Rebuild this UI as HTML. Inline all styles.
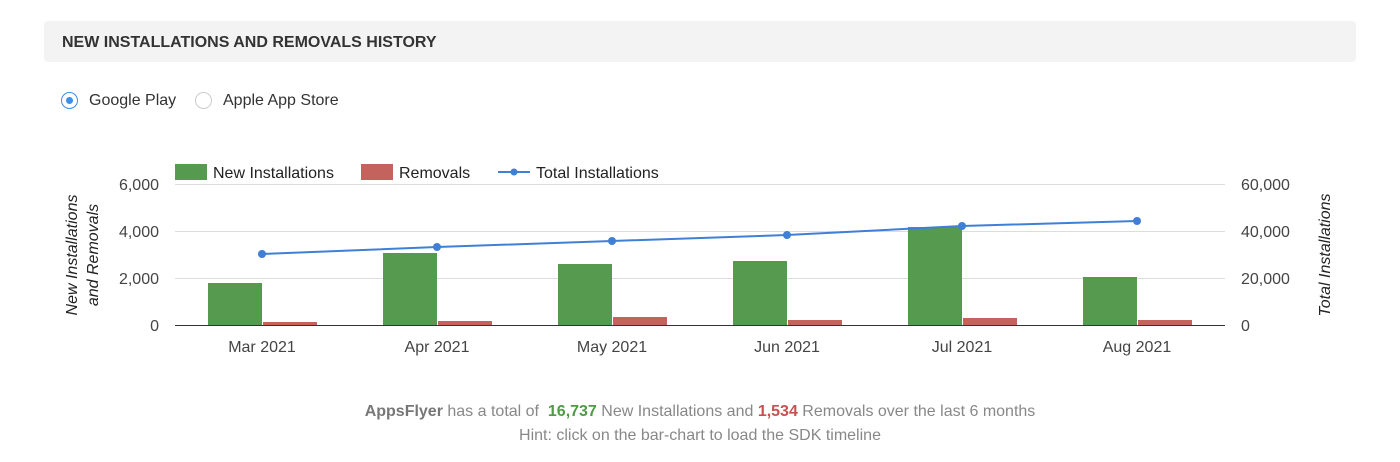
<html><head><style>
body{margin:0;width:1400px;height:462px;background:#fff;font-family:"Liberation Sans",Arial,sans-serif;position:relative;overflow:hidden}
.hdr{position:absolute;left:44px;top:21px;width:1312px;height:41px;background:#f3f3f3;border-radius:4px}
.hdr span{position:absolute;left:18px;top:13px;font-weight:bold;font-size:16px;color:#333}
.r{position:absolute;top:92px;width:17px;height:17px;border-radius:50%;border:1px solid #ccc;box-sizing:border-box}
.lbl{position:absolute;top:92px;font-size:16px;color:#333}
.foot{position:absolute;left:0;width:1400px;text-align:center;font-size:16px;color:#888}
</style></head><body>
<div class="hdr"><span>NEW INSTALLATIONS AND REMOVALS HISTORY</span></div>
<div class="r" style="left:61px;border:1.5px solid #3b8eea"><div style="position:absolute;left:3.5px;top:3.5px;width:7px;height:7px;border-radius:50%;background:#3b8eea"></div></div>
<div class="lbl" style="left:89px">Google Play</div>
<div class="r" style="left:195px"></div>
<div class="lbl" style="left:223px">Apple App Store</div>
<svg style="position:absolute;left:0;top:0" width="1400" height="462" font-family="Liberation Sans,Arial,sans-serif" font-size="16" fill="#444">
<g stroke="#ddd"><line x1="175" x2="1225" y1="184.5" y2="184.5"/><line x1="175" x2="1225" y1="231.5" y2="231.5"/><line x1="175" x2="1225" y1="278.5" y2="278.5"/></g>
<g fill="#559a4e">
<rect x="208" y="283" width="54" height="42"/><rect x="383" y="253" width="54" height="72"/><rect x="558" y="264" width="54" height="61"/><rect x="733" y="261" width="54" height="64"/><rect x="908" y="227" width="54" height="98"/><rect x="1083" y="277" width="54" height="48"/></g>
<g fill="#c4625e">
<rect x="263" y="322" width="54" height="3"/><rect x="438" y="321" width="54" height="4"/><rect x="613" y="317" width="54" height="8"/><rect x="788" y="320" width="54" height="5"/><rect x="963" y="318" width="54" height="7"/><rect x="1138" y="320" width="54" height="5"/></g>
<line x1="175" x2="1225" y1="325.5" y2="325.5" stroke="#333"/>
<polyline fill="none" stroke="#3f7fd6" stroke-width="2" points="262,254 437,247 612,241 787,235 962,226 1137,221"/>
<g fill="#3f7fd6"><circle cx="262" cy="254" r="4"/><circle cx="437" cy="247" r="4"/><circle cx="612" cy="241" r="4"/><circle cx="787" cy="235" r="4"/><circle cx="962" cy="226" r="4"/><circle cx="1137" cy="221" r="4"/></g>
<g text-anchor="end"><text x="159" y="190">6,000</text><text x="159" y="237">4,000</text><text x="159" y="284">2,000</text><text x="159" y="331">0</text></g>
<g><text x="1241" y="190">60,000</text><text x="1241" y="237">40,000</text><text x="1241" y="284">20,000</text><text x="1241" y="331">0</text></g>
<g text-anchor="middle"><text x="262" y="352">Mar 2021</text><text x="437" y="352">Apr 2021</text><text x="612" y="352">May 2021</text><text x="787" y="352">Jun 2021</text><text x="962" y="352">Jul 2021</text><text x="1137" y="352">Aug 2021</text></g>
<g font-style="italic" text-anchor="middle" fill="#222"><text transform="translate(77,255) rotate(-90)">New Installations</text><text transform="translate(98,255) rotate(-90)">and Removals</text><text transform="translate(1330,255) rotate(-90)">Total Installations</text></g>
<rect x="175" y="164" width="32" height="16" fill="#559a4e"/><text x="213" y="178" fill="#222">New Installations</text>
<rect x="361" y="164" width="32" height="16" fill="#c4625e"/><text x="399" y="178" fill="#222">Removals</text>
<line x1="498" x2="530" y1="172" y2="172" stroke="#3f7fd6" stroke-width="2"/><circle cx="514" cy="172" r="3.5" fill="#3f7fd6"/><text x="536" y="178" fill="#222">Total Installations</text>
</svg>
<div class="foot" style="top:403px"><b style="color:#777">AppsFlyer</b> has a total of &nbsp;<b style="color:#4e9a45">16,737</b> New Installations and <b style="color:#c4524e">1,534</b> Removals over the last 6 months</div>
<div class="foot" style="top:427px">Hint: click on the bar-chart to load the SDK timeline</div>
</body></html>
